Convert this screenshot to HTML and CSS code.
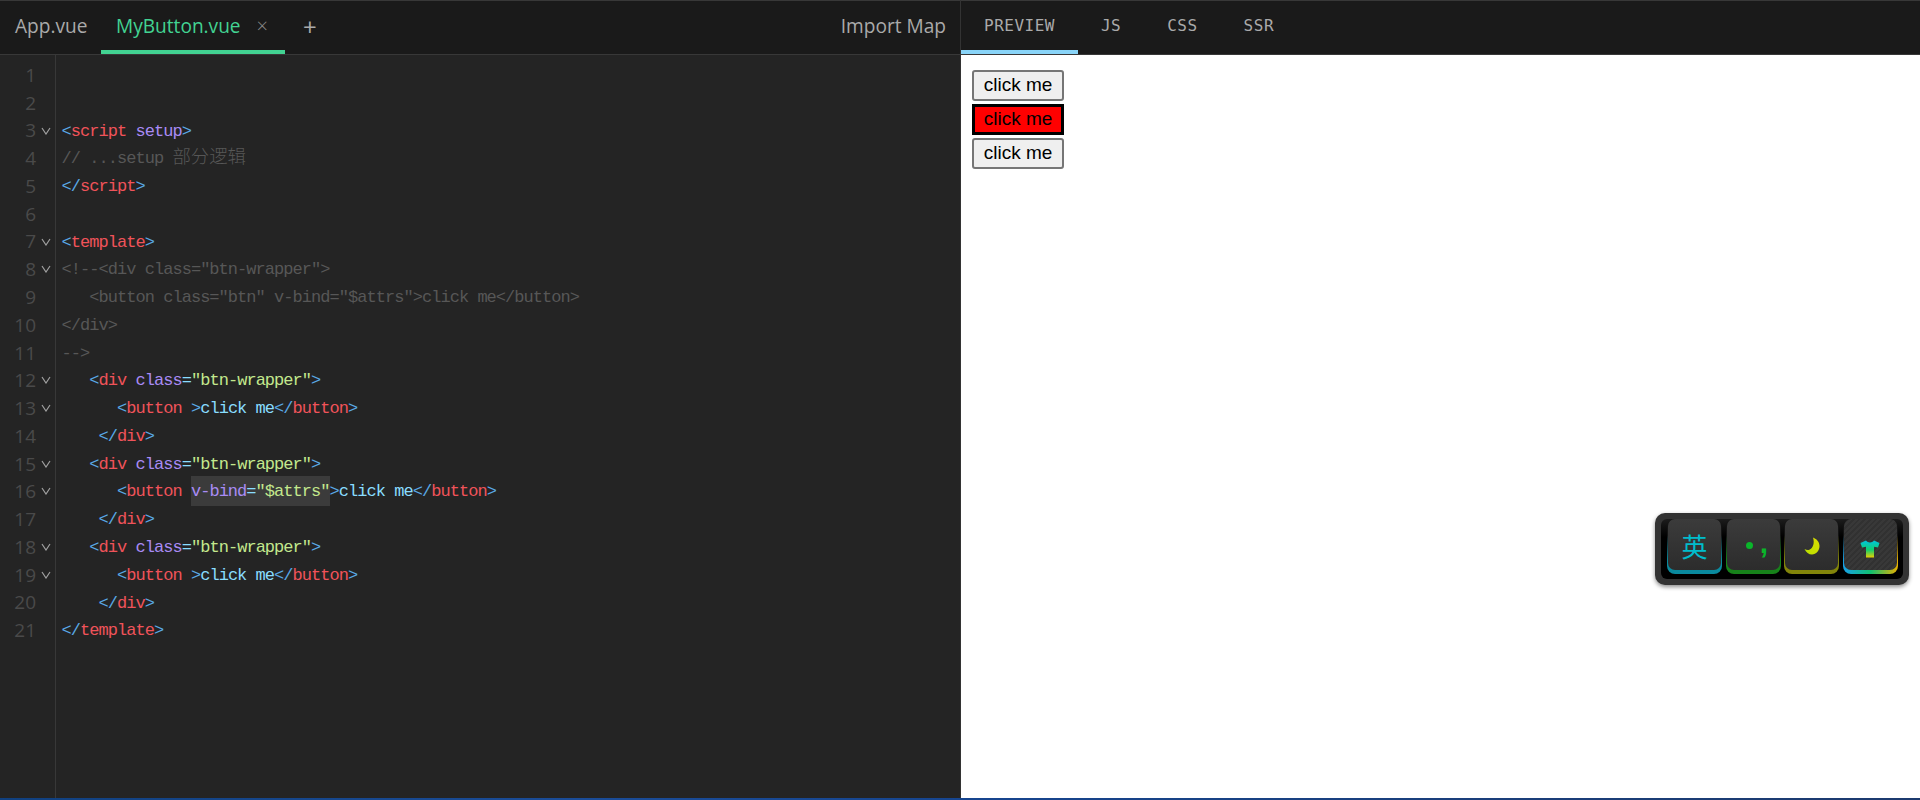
FILE: index.html
```html
<!DOCTYPE html>
<html lang="en">
<head>
<meta charset="utf-8">
<title>Vue SFC Playground</title>
<link rel="stylesheet" href="styles.css">
</head>
<body>
<div class="app">
  <section class="pane left">
    <header class="bar tabs">
      <div class="file"><span>App.vue</span></div>
      <div class="file active"><span>MyButton.vue</span><span class="close">×</span></div>
      <div class="add">+</div>
      <div class="import">Import Map</div>
    </header>
    <div class="editor">
      <div class="gutter">
        <div class="ln"><span class="num">1</span></div>
        <div class="ln"><span class="num">2</span></div>
        <div class="ln"><span class="num">3</span><svg class="fold" viewBox="0 0 10 8"><path d="M1 1 5 7 9 1"/></svg></div>
        <div class="ln"><span class="num">4</span></div>
        <div class="ln"><span class="num">5</span></div>
        <div class="ln"><span class="num">6</span></div>
        <div class="ln"><span class="num">7</span><svg class="fold" viewBox="0 0 10 8"><path d="M1 1 5 7 9 1"/></svg></div>
        <div class="ln"><span class="num">8</span><svg class="fold" viewBox="0 0 10 8"><path d="M1 1 5 7 9 1"/></svg></div>
        <div class="ln"><span class="num">9</span></div>
        <div class="ln"><span class="num">10</span></div>
        <div class="ln"><span class="num">11</span></div>
        <div class="ln"><span class="num">12</span><svg class="fold" viewBox="0 0 10 8"><path d="M1 1 5 7 9 1"/></svg></div>
        <div class="ln"><span class="num">13</span><svg class="fold" viewBox="0 0 10 8"><path d="M1 1 5 7 9 1"/></svg></div>
        <div class="ln"><span class="num">14</span></div>
        <div class="ln"><span class="num">15</span><svg class="fold" viewBox="0 0 10 8"><path d="M1 1 5 7 9 1"/></svg></div>
        <div class="ln"><span class="num">16</span><svg class="fold" viewBox="0 0 10 8"><path d="M1 1 5 7 9 1"/></svg></div>
        <div class="ln"><span class="num">17</span></div>
        <div class="ln"><span class="num">18</span><svg class="fold" viewBox="0 0 10 8"><path d="M1 1 5 7 9 1"/></svg></div>
        <div class="ln"><span class="num">19</span><svg class="fold" viewBox="0 0 10 8"><path d="M1 1 5 7 9 1"/></svg></div>
        <div class="ln"><span class="num">20</span></div>
        <div class="ln"><span class="num">21</span></div>
      </div>
      <div class="code">
        <div class="cl"> </div>
        <div class="cl"> </div>
        <div class="cl"><i class="b">&lt;</i><i class="t">script</i> <i class="a">setup</i><i class="b">&gt;</i></div>
        <div class="cl"><i class="c">// ...setup <span class="cjk">部分逻辑</span></i></div>
        <div class="cl"><i class="b">&lt;/</i><i class="t">script</i><i class="b">&gt;</i></div>
        <div class="cl"> </div>
        <div class="cl"><i class="b">&lt;</i><i class="t">template</i><i class="b">&gt;</i></div>
        <div class="cl"><i class="c">&lt;!--&lt;div class="btn-wrapper"&gt;</i></div>
        <div class="cl"><i class="c">   &lt;button class="btn" v-bind="$attrs"&gt;click me&lt;/button&gt;</i></div>
        <div class="cl"><i class="c">&lt;/div&gt;</i></div>
        <div class="cl"><i class="c">--&gt;</i></div>
        <div class="cl">   <i class="b">&lt;</i><i class="t">div</i> <i class="a">class</i><i class="x">=</i><i class="s">"btn-wrapper"</i><i class="b">&gt;</i></div>
        <div class="cl">      <i class="b">&lt;</i><i class="t">button</i> <i class="b">&gt;</i><i class="x">click me</i><i class="b">&lt;/</i><i class="t">button</i><i class="b">&gt;</i></div>
        <div class="cl">    <i class="b">&lt;/</i><i class="t">div</i><i class="b">&gt;</i></div>
        <div class="cl">   <i class="b">&lt;</i><i class="t">div</i> <i class="a">class</i><i class="x">=</i><i class="s">"btn-wrapper"</i><i class="b">&gt;</i></div>
        <div class="cl">      <i class="b">&lt;</i><i class="t">button</i> <span class="hl"><i class="a">v-bind</i><i class="x">=</i><i class="s">"$attrs"</i></span><i class="b">&gt;</i><i class="x">click me</i><i class="b">&lt;/</i><i class="t">button</i><i class="b">&gt;</i></div>
        <div class="cl">    <i class="b">&lt;/</i><i class="t">div</i><i class="b">&gt;</i></div>
        <div class="cl">   <i class="b">&lt;</i><i class="t">div</i> <i class="a">class</i><i class="x">=</i><i class="s">"btn-wrapper"</i><i class="b">&gt;</i></div>
        <div class="cl">      <i class="b">&lt;</i><i class="t">button</i> <i class="b">&gt;</i><i class="x">click me</i><i class="b">&lt;/</i><i class="t">button</i><i class="b">&gt;</i></div>
        <div class="cl">    <i class="b">&lt;/</i><i class="t">div</i><i class="b">&gt;</i></div>
        <div class="cl"><i class="b">&lt;/</i><i class="t">template</i><i class="b">&gt;</i></div>
      </div>
    </div>
  </section>
  <section class="pane right">
    <header class="bar modes">
      <div class="mode active">PREVIEW</div>
      <div class="mode">JS</div>
      <div class="mode">CSS</div>
      <div class="mode">SSR</div>
    </header>
    <div class="preview">
      <button class="pbtn">click me</button>
      <button class="pbtn red">click me</button>
      <button class="pbtn">click me</button>
    </div>
  </section>
</div>
<div class="ime">
  <div class="well">
    <div class="key k1"><div class="face"><span class="zh">英</span></div></div>
    <div class="key k2"><div class="face"><span class="punct"><b class="dot"></b><span class="comma">,</span></span></div></div>
    <div class="key k3"><div class="face"><svg class="moon" viewBox="0 0 16 18"><defs><linearGradient id="moonfill" x1="0" y1="1" x2="1" y2="0"><stop offset="0" stop-color="#b8e000"/><stop offset="1" stop-color="#dcdc00"/></linearGradient></defs><path fill="url(#moonfill)" d="M9 .5c4 1.500 6.500 4.800 6.500 8.500 0 4.600-3.400 8.500-7.500 8.500-3.200 0-6-2-7.500-5.500 1.500.9 3.300 1.300 4.800.8C9.300 11.300 10.700 5.500 9 .5z"/></svg></div></div>
    <div class="key k4"><div class="face stripes"><svg class="shirt" viewBox="0 0 20 18"><defs><linearGradient id="shirtfill" x1="0" y1="0" x2="0" y2="1"><stop offset="0" stop-color="#00c4e0"/><stop offset=".55" stop-color="#10d070"/><stop offset="1" stop-color="#e8d000"/></linearGradient></defs><path fill="url(#shirtfill)" d="M6 .5 .5 3 2 7.500l4-.8v10.800h8V6.700l4 .8L19.500 3 14 .5c-.8 1.300-2.300 2-4 2s-3.200-.7-4-2z"/></svg></div></div>
  </div>
</div>
</body>
</html>
```
FILE: styles.css
```css
* { box-sizing: border-box; }
html, body { margin: 0; height: 100%; overflow: hidden; background: #fff; }
.app {
  display: flex;
  height: 800px;
  border-style: solid;
  border-width: 0 0 2px;
  border-image: linear-gradient(90deg, #10407f 0, #1a4c98 30%, #16458f 50%, #1a3f7c 75%, #1c3a6e 100%) 1;
}
.pane { display: flex; flex-direction: column; min-width: 0; }
.left { width: 961px; background: #242424; border-right: 1px solid #333; }
.right { flex: 1; background: #fff; }
.bar {
  display: flex;
  align-items: stretch;
  height: 55px;
  flex: none;
  background: #1a1a1a;
  border-top: 1px solid #383838;
  border-bottom: 1px solid #383838;
}

/* file tabs */
.tabs { font-family: "Open Sans", sans-serif; font-size: 19.1px; color: #aaa; }
.file {
  display: flex;
  align-items: center;
  gap: 12px;
  padding: 0 21px 0 15px;
  border-bottom: 4px solid transparent;
  width: 101px;
  white-space: nowrap;
}
.file.active {
  width: 184px;
  color: #42d392;
  border-bottom-color: #42d392;
}
.close { font-size: 20px; color: #8a8a8a; margin-left: 4px; font-weight: 300; }
.add { display: flex; align-items: center; padding: 0 0 3px 18px; font-size: 24px; color: #aaa; }
.import { margin-left: auto; display: flex; align-items: center; padding: 0 14px 3px 0; }

/* editor */
.editor { flex: 1; display: flex; min-height: 0; }
.gutter { width: 56px; flex: none; border-right: 1px solid #383838; padding-top: 6px; }
.ln {
  position: relative;
  height: 27.78px;
  display: flex;
  align-items: center;
  padding-right: 19px;
  justify-content: flex-end;
  font-family: "Open Sans", sans-serif;
  font-size: 19px;
  color: #4a4a4a;
}
.fold { position: absolute; right: 4px; top: 10px; width: 10px; height: 8px; }
.fold path { fill: none; stroke: #a0a0a0; stroke-width: 1.2; }
.code {
  flex: 1;
  padding: 7px 0 0 5.500px;
  font-family: "Liberation Mono", monospace;
  font-size: 17px;
  letter-spacing: -0.96px;
  color: #89ddff;
}
.cl { height: 27.78px; line-height: 27.78px; white-space: pre; }
.cl i { font-style: normal; }
.b { color: #5aa9e6; }
.t { color: #f0535a; }
.a { color: #a98bf5; }
.x { color: #89ddff; }
.s { color: #c3e88d; }
.c { color: #575757; }
.cjk { font-family: "Noto Sans CJK SC", sans-serif; font-size: 18.4px; letter-spacing: 0; line-height: 0; font-weight: 300; }
.hl { background: #3b3b3b; padding: 6px 0 5px; }

/* output tabs */
.modes { font-family: "DejaVu Sans Mono", monospace; font-size: 16px; letter-spacing: .5px; color: #aaa; }
.mode {
  display: flex;
  align-items: center;
  padding: 0 23px;
  border-bottom: 4px solid transparent;
}
.mode.active { border-bottom-color: #89d4f8; }

/* preview */
.preview {
  flex: 1;
  display: flex;
  flex-direction: column;
  align-items: flex-start;
  gap: 3px;
  padding: 15px 0 0 11px;
}
.pbtn {
  width: 92px;
  height: 31px;
  padding: 0 0 1px;
  font-family: "Liberation Sans", sans-serif;
  font-size: 19px;
  color: #000;
  background: #efefef;
  border: 2px solid #767676;
  border-radius: 3px;
}
.pbtn.red { background: #f00; border: 3px solid #000; border-radius: 0; }

/* floating input-method toolbar */
.ime {
  position: fixed;
  left: 1655px;
  top: 513px;
  width: 254px;
  height: 72px;
  padding: 6px;
  background: #333;
  border-radius: 10px;
  box-shadow: 0 2px 4px rgba(0,0,0,.45);
}
.well {
  height: 60px;
  display: flex;
  gap: 3.5px;
  padding: 0 6px;
  background: linear-gradient(#1c1c1c, #000 30%);
  border-radius: 6px;
}
.key {
  --ring: #0a8a9e;
  width: 55px;
  height: 55px;
  flex: none;
  padding: 0 1px 4px;
  border-radius: 8px;
  background: linear-gradient(#141414 30%, transparent 75%), var(--ring);
}
.face {
  height: 100%;
  display: flex;
  align-items: center;
  justify-content: center;
  padding-top: 2px;
  border-radius: 7px;
  background: linear-gradient(#3b3b3b, #2c2c2c);
}
.k2 { --ring: #17821a; }
.k3 { --ring: #82840a; }
.k4 { --ring: linear-gradient(90deg, #18a0e8, #10c070 50%, #e8b000); }
.stripes { background: repeating-linear-gradient(135deg, #383838 0 2px, #313131 2px 4px); }
.zh { font-family: "Noto Sans CJK SC", sans-serif; font-size: 26px; line-height: 1; color: #00bccc; }
.punct { display: flex; align-items: center; gap: 7px; margin-left: 8px; }
.dot { display: block; width: 7px; height: 7px; border-radius: 50%; background: #0ab52a; }
.comma { font-family: "Liberation Sans", sans-serif; font-weight: 700; font-size: 30px; line-height: 16px; height: 16px; color: #0ab52a; margin-top: -6px; }
.moon { width: 16px; height: 18px; }
.shirt { width: 20px; height: 18px; margin-top: 7px; }
```
